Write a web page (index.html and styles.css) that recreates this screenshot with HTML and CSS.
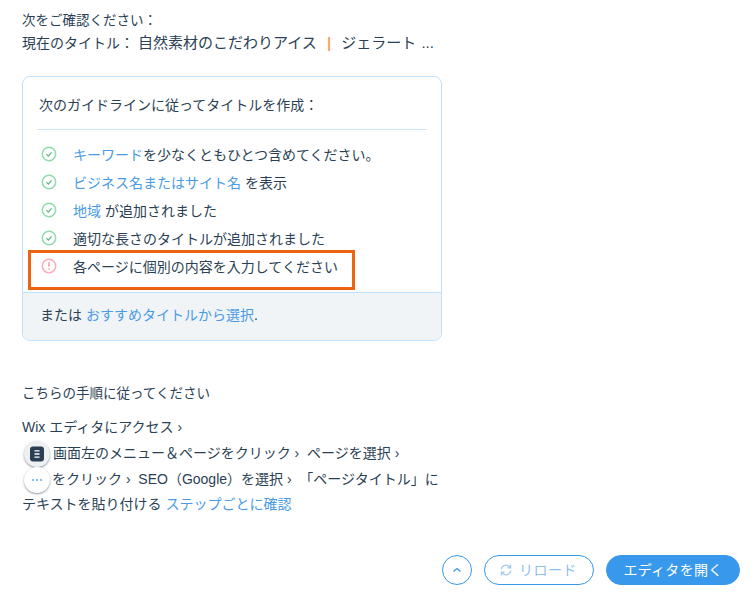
FILE: index.html
```html
<!DOCTYPE html>
<html lang="ja">
<head>
  <meta charset="UTF-8">
  <meta name="viewport" content="width=device-width, initial-scale=1.0">
  <title>タイトルの確認</title>
  <link rel="stylesheet" href="styles.css">
</head>
<body>

  <div class="page">
    <div class="current">
      <p class="current-label">次をご確認ください：</p>
      <p class="current-title">現在のタイトル： <span class="current-value">自然素材のこだわりアイス <span class="pipe">|</span> ジェラート ...</span></p>
    </div>

    <div class="card">
      <div class="card-body">
        <h2 class="card-title">次のガイドラインに従ってタイトルを作成：</h2>
        <ul class="checks">
          <li class="check">
            <svg class="check-icon" viewBox="0 0 16 16"><circle cx="8" cy="8" r="6.7" fill="none" stroke="#8fdcab" stroke-width="1.5"/><path d="M5.4 8.2l1.9 1.9 3.3-3.7" fill="none" stroke="#4cb87a" stroke-width="1.1"/></svg>
            <span><a class="link" href="#">キーワード</a>を少なくともひとつ含めてください。</span>
          </li>
          <li class="check">
            <svg class="check-icon" viewBox="0 0 16 16"><circle cx="8" cy="8" r="6.7" fill="none" stroke="#8fdcab" stroke-width="1.5"/><path d="M5.4 8.2l1.9 1.9 3.3-3.7" fill="none" stroke="#4cb87a" stroke-width="1.1"/></svg>
            <span><a class="link" href="#">ビジネス名またはサイト名</a> を表示</span>
          </li>
          <li class="check">
            <svg class="check-icon" viewBox="0 0 16 16"><circle cx="8" cy="8" r="6.7" fill="none" stroke="#8fdcab" stroke-width="1.5"/><path d="M5.4 8.2l1.9 1.9 3.3-3.7" fill="none" stroke="#4cb87a" stroke-width="1.1"/></svg>
            <span><a class="link" href="#">地域</a> が追加されました</span>
          </li>
          <li class="check">
            <svg class="check-icon" viewBox="0 0 16 16"><circle cx="8" cy="8" r="6.7" fill="none" stroke="#8fdcab" stroke-width="1.5"/><path d="M5.4 8.2l1.9 1.9 3.3-3.7" fill="none" stroke="#4cb87a" stroke-width="1.1"/></svg>
            <span>適切な長さのタイトルが追加されました</span>
          </li>
          <li class="check check-todo">
            <svg class="check-icon" viewBox="0 0 16 16"><circle cx="8" cy="8" r="6.7" fill="none" stroke="#ffa9b9" stroke-width="1.5"/><path d="M8 4.4v4.2M8 10.2v1.4" fill="none" stroke="#f57f95" stroke-width="1.3"/></svg>
            <span>各ページに個別の内容を入力してください</span>
          </li>
        </ul>
      </div>
      <div class="card-footer">または <a class="link" href="#">おすすめタイトルから選択</a>.</div>
    </div>

    <div class="steps">
      <p class="steps-title">こちらの手順に従ってください</p>
      <div class="step-line">Wix エディタにアクセス ›</div>
      <div class="step-line">
        <span class="step-btn step-btn-menu"><svg viewBox="0 0 16 16" width="16" height="16"><rect x="1" y="0.5" width="14" height="15" rx="3" fill="#2b3f54"/><path d="M5.5 4.8h5M5.5 8h5M5.5 11.2h5" stroke="#fff" stroke-width="1.3"/></svg></span>画面左のメニュー＆ページをクリック ›&nbsp; ページを選択 ›
      </div>
      <div class="step-line">
        <span class="step-btn"><svg viewBox="0 0 16 16" width="16" height="16"><path d="M3 8h2M7 8h2M11 8h2" stroke="#5aa9ee" stroke-width="1.6"/></svg></span>をクリック ›&nbsp; SEO（Google）を選択 ›&nbsp; 「ページタイトル」に
      </div>
      <div class="step-line">テキストを貼り付ける <a class="link" href="#">ステップごとに確認</a></div>
    </div>

    <div class="actions">
      <button class="btn btn-round">
        <svg viewBox="0 0 12 12" width="12" height="12"><path d="M2.5 7.5L6 4.5l3.5 3" fill="none" stroke="#3899ec" stroke-width="1.3"/></svg>
      </button>
      <button class="btn btn-outline">
        <svg class="btn-icon" viewBox="0 0 14 14" width="14" height="14"><path d="M2.2 6.3A4.9 4.9 0 0 1 11 4.2M11.8 7.7A4.9 4.9 0 0 1 3 9.8" fill="none" stroke="#a8cdf0" stroke-width="1.4"/><path d="M11.6 1.6v3.2H8.4M2.4 12.4V9.2h3.2" fill="none" stroke="#a8cdf0" stroke-width="1.4"/></svg>
        リロード
      </button>
      <button class="btn btn-primary">エディタを開く</button>
    </div>
  </div>

</body>
</html>
```

FILE: styles.css
```css
* {
  margin: 0;
  padding: 0;
  box-sizing: border-box;
}

body {
  font-family: "Liberation Sans", "Noto Sans CJK JP", sans-serif;
  font-size: 14px;
  color: #2b3f54;
  background: #fff;
  height: 598px;
  overflow: hidden;
}

.page {
  display: flex;
  flex-direction: column;
  padding: 10px 16px 0 22px;
  height: 598px;
}

.link {
  color: #4a9be6;
  text-decoration: none;
}

.current {
  height: 66px;
}

.current-label {
  font-size: 13.5px;
  line-height: 22px;
}

.current-title {
  line-height: 22px;
}

.current-value {
  font-size: 15px;
  word-spacing: 1px;
}

.pipe {
  color: #f2a65a;
  font-weight: bold;
  margin: 0 5px;
}

.card {
  width: 420px;
  height: 265px;
  border: 1px solid #bfe1fb;
  border-radius: 8px;
  display: flex;
  flex-direction: column;
  overflow: hidden;
}

.card-body {
  flex: 1;
  padding: 0 14px;
}

.card-title {
  font-size: 14px;
  font-weight: normal;
  height: 53px;
  line-height: 56px;
  padding-left: 2px;
  border-bottom: 1px solid #cfe6f8;
}

.checks {
  list-style: none;
  padding-top: 10px;
}

.check {
  position: relative;
  display: flex;
  align-items: center;
  gap: 16px;
  height: 28px;
  padding-left: 4px;
}

.check-icon {
  width: 16px;
  height: 16px;
  flex: none;
}

/* orange marker round the item that still needs work */
.check-todo::after {
  content: "";
  position: absolute;
  left: -9px;
  top: -2px;
  width: 321px;
  height: 34px;
  border: 3px solid #ec640f;
}

.card-footer {
  height: 48px;
  line-height: 44px;
  padding-left: 17px;
  background: #f0f4f7;
  border-top: 1px solid #bfe1fb;
}

.steps {
  margin-top: 42px;
  width: 420px;
}

.steps-title {
  font-size: 13.5px;
  line-height: 22px;
  margin-bottom: 9px;
}

.step-line {
  height: 26px;
  line-height: 26px;
  white-space: nowrap;
}

.step-line:last-child {
  height: 24px;
  line-height: 24px;
}

.step-btn {
  display: inline-flex;
  align-items: center;
  justify-content: center;
  width: 26px;
  height: 26px;
  margin: -4px 2px -3px 2px;
  vertical-align: middle;
  border-radius: 50%;
  background: #fff;
  box-shadow: 0 1px 2px rgba(43, 63, 84, 0.55);
}

.step-btn-menu {
  margin-right: 3px;
  background: #eef0f2;
}

.actions {
  margin-top: auto;
  margin-bottom: 13px;
  display: flex;
  justify-content: flex-end;
  gap: 12px;
}

.btn {
  height: 30px;
  border-radius: 15px;
  font-family: inherit;
  font-size: 14px;
  border: 1px solid #3899ec;
  background: #fff;
  display: flex;
  align-items: center;
  justify-content: center;
}

.btn-round {
  width: 30px;
}

.btn-outline {
  width: 110px;
  gap: 6px;
  padding: 0 0 2px 0;
  color: #8fc0ee;
  letter-spacing: 0.5px;
}

.btn-icon {
  margin: 2px 0 0 -2px;
}

.btn-primary {
  width: 134px;
  padding-bottom: 2px;
  letter-spacing: 0.3px;
  background: #3899ec;
  color: #fff;
}
```
